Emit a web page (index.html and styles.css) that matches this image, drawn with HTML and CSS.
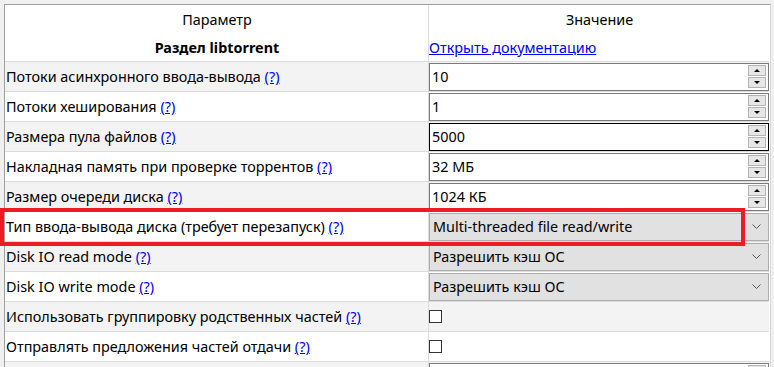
FILE: index.html
```html
<!DOCTYPE html>
<html lang="ru">
<head>
  <meta charset="UTF-8">
  <meta name="viewport" content="width=device-width, initial-scale=1.0">
  <title>Дополнительные настройки</title>
  <link rel="stylesheet" href="styles.css">
</head>
<body>
  <div class="panel">
    <table class="settings">
      <colgroup>
        <col class="col-name">
        <col class="col-value">
      </colgroup>
      <thead>
        <tr class="head">
          <th>Параметр</th>
          <th>Значение</th>
        </tr>
      </thead>
      <tbody>
        <tr class="section">
          <th>Раздел libtorrent</th>
          <td><a href="#">Открыть документацию</a></td>
        </tr>
        <tr>
          <td>Потоки асинхронного ввода-вывода <a href="#">(?)</a></td>
          <td>
            <div class="spin"><span class="spin-val">10</span><span class="spin-btns"><span class="up"></span><span class="down"></span></span></div>
          </td>
        </tr>
        <tr>
          <td>Потоки хеширования <a href="#">(?)</a></td>
          <td>
            <div class="spin"><span class="spin-val">1</span><span class="spin-btns"><span class="up"></span><span class="down"></span></span></div>
          </td>
        </tr>
        <tr>
          <td>Размера пула файлов <a href="#">(?)</a></td>
          <td>
            <div class="spin hover"><span class="spin-val">5000</span><span class="spin-btns"><span class="up"></span><span class="down"></span></span></div>
          </td>
        </tr>
        <tr>
          <td>Накладная память при проверке торрентов <a href="#">(?)</a></td>
          <td>
            <div class="spin"><span class="spin-val">32 МБ</span><span class="spin-btns"><span class="up"></span><span class="down"></span></span></div>
          </td>
        </tr>
        <tr>
          <td>Размер очереди диска <a href="#">(?)</a></td>
          <td>
            <div class="spin"><span class="spin-val">1024 КБ</span><span class="spin-btns"><span class="up"></span><span class="down"></span></span></div>
          </td>
        </tr>
        <tr>
          <td>Тип ввода-вывода диска (требует перезапуск) <a href="#">(?)</a></td>
          <td>
            <div class="combo"><span class="combo-val">Multi-threaded file read/write</span><svg class="chev" width="9" height="5" viewBox="0 0 9 5"><path d="M0.5 0.5 L4.5 4.5 L8.5 0.5" fill="none" stroke="#555" stroke-width="1"/></svg></div>
          </td>
        </tr>
        <tr>
          <td>Disk IO read mode <a href="#">(?)</a></td>
          <td>
            <div class="combo"><span class="combo-val">Разрешить кэш ОС</span><svg class="chev" width="9" height="5" viewBox="0 0 9 5"><path d="M0.5 0.5 L4.5 4.5 L8.5 0.5" fill="none" stroke="#555" stroke-width="1"/></svg></div>
          </td>
        </tr>
        <tr>
          <td>Disk IO write mode <a href="#">(?)</a></td>
          <td>
            <div class="combo"><span class="combo-val">Разрешить кэш ОС</span><svg class="chev" width="9" height="5" viewBox="0 0 9 5"><path d="M0.5 0.5 L4.5 4.5 L8.5 0.5" fill="none" stroke="#555" stroke-width="1"/></svg></div>
          </td>
        </tr>
        <tr>
          <td>Использовать группировку родственных частей <a href="#">(?)</a></td>
          <td><span class="check"></span></td>
        </tr>
        <tr>
          <td>Отправлять предложения частей отдачи <a href="#">(?)</a></td>
          <td><span class="check"></span></td>
        </tr>
        <tr>
          <td></td>
          <td>
            <div class="spin"><span class="spin-val"></span><span class="spin-btns"><span class="up"></span><span class="down"></span></span></div>
          </td>
        </tr>
      </tbody>
    </table>
  </div>
  <!-- пометка поверх таблицы -->
  <div class="mark"></div>
</body>
</html>
```

FILE: styles.css
```css
*{margin:0;padding:0;box-sizing:border-box;}

html, body {
  height: 100%;
  overflow: hidden;
}
body {
  position: relative;
  background: #f0f0f0;
  font-family: "Noto Sans", "Open Sans", sans-serif;
  font-size: 14.4px;
  color: #000;
}

.panel {
  margin: 4px 3px 0 4px;
  height: 400px;
  background: #fff;
  border-top: 1px solid #a0a0a0;
  border-left: 1px solid #a0a0a0;
  border-right: 1px solid #d8d8d8;
}

.settings {
  width: 764px;
  border-collapse: separate;
  border-spacing: 0;
  table-layout: fixed;
}
.col-name { width: 424px; }
.col-value { width: 340px; }

.settings th,
.settings td {
  padding: 0 0 0 1px;
  text-align: left;
  font-weight: normal;
  white-space: nowrap;
  vertical-align: middle;
}
.settings tr > :first-child {
  border-right: 1px solid #dcdcdc;
}

.head th {
  height: 28px;
  text-align: center;
}
.section th {
  height: 29px;
  text-align: center;
  font-weight: bold;
  border-bottom: 1px solid #dcdcdc;
}
.section td {
  border-bottom: 1px solid #dcdcdc;
}

tbody tr:not(.section) td {
  height: 30px;
  border-bottom: 1px solid #dcdcdc;
}
tbody tr:nth-child(even) td {
  background: #f3f3f3;
}
.settings tr > td:last-child {
  padding: 0;
}

a {
  color: #0000ee;
  text-decoration: underline;
}

/* поле с кнопками вверх/вниз */
.spin {
  display: flex;
  align-items: center;
  height: 28px;
  border: 1px solid #7a7a7a;
  background: #fff;
}
.spin.hover { border-color: #000; }
.spin-val {
  flex: 1;
  padding-left: 2px;
}
.spin-btns {
  display: flex;
  flex-direction: column;
  gap: 1px;
  margin-right: 2px;
}
.spin-btns span {
  display: flex;
  align-items: center;
  justify-content: center;
  width: 18px;
  height: 11px;
  background: #e6e6e6;
  border: 1px solid #b4b4b4;
}
.spin-btns .up::before,
.spin-btns .down::before {
  content: "";
  border-left: 3px solid transparent;
  border-right: 3px solid transparent;
}
.spin-btns .up::before { border-bottom: 3px solid #000; }
.spin-btns .down::before { border-top: 3px solid #000; }

/* выпадающий список */
.combo {
  display: flex;
  align-items: center;
  height: 28px;
  background: #e1e1e1;
  border: 1px solid #adadad;
  padding: 0 7px 0 3px;
}
.combo-val { flex: 1; }

.check {
  display: block;
  width: 13px;
  height: 13px;
  border: 1px solid #333;
  background: #fff;
}

.mark {
  position: absolute;
  left: 0;
  top: 208px;
  width: 745px;
  height: 38px;
  border: 4px solid #ed1c24;
}
```
